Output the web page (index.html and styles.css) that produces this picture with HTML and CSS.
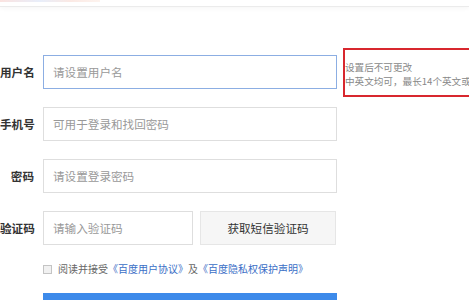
FILE: index.html
```html
<!DOCTYPE html>
<html lang="zh-CN">
<head>
<meta charset="utf-8">
<title>注册</title>
<link rel="stylesheet" href="styles.css">
</head>
<body>
<div class="page">
<div class="topbar"><div class="topbar-strip"></div></div>
<form class="form">
  <div class="row">
    <label class="label">用户名</label>
    <input class="field field-focus" type="text" placeholder="请设置用户名">
    <div class="tip">
      <div class="tip-line">设置后不可更改</div>
      <div class="tip-line">中英文均可，最长14个英文或7个汉字</div>
    </div>
  </div>
  <div class="row">
    <label class="label">手机号</label>
    <input class="field" type="text" placeholder="可用于登录和找回密码">
  </div>
  <div class="row">
    <label class="label">密码</label>
    <input class="field" type="password" placeholder="请设置登录密码">
  </div>
  <div class="row row-code">
    <label class="label">验证码</label>
    <input class="field field-short" type="text" placeholder="请输入验证码">
    <button class="sms-btn" type="button">获取短信验证码</button>
  </div>
  <div class="agree">
    <span class="check"></span>
    <span class="agree-text">阅读并接受<a class="link">《百度用户协议》</a>及<a class="link">《百度隐私权保护声明》</a></span>
  </div>
  <div class="submit"></div>
</form>
</div>
</body>
</html>
```
FILE: styles.css
```css
html, body {
  margin: 0;
  padding: 0;
  background: #fff;
  overflow: hidden;
}
body {
  font-family: "Noto Sans CJK SC", "Microsoft YaHei", sans-serif;
  color: #333;
}
.page {
  width: 469px;
  height: 300px;
  overflow: hidden;
}
.topbar {
  height: 6px;
  border-bottom: 1px solid #ebebeb;
  box-shadow: 0 2px 4px rgba(0, 0, 0, 0.03);
}
.topbar-strip {
  width: 100px;
  height: 2px;
  background: linear-gradient(90deg, #fbe3e0, #e8eefa 40%, #fbe9e4 70%, #fdf3ee);
}
.form {
  padding-top: 48px;
  margin: 0;
}
.row {
  display: flex;
  align-items: center;
  height: 34px;
  margin-bottom: 18px;
}
.row-code {
  margin-top: 1px;
}
.label {
  width: 34px;
  flex: none;
  margin-right: 9px;
  text-align: right;
  white-space: nowrap;
  font-size: 11.6px;
  font-weight: bold;
  color: #333;
}
.field {
  box-sizing: border-box;
  width: 294px;
  height: 34px;
  flex: none;
  margin: 0;
  padding: 0 9px;
  border: 1px solid #dedede;
  border-radius: 0;
  outline: none;
  font-family: inherit;
  font-size: 11.6px;
  color: #333;
  background: #fff;
}
.field::placeholder {
  color: #999;
}
.field-focus {
  border-color: #8caee3;
}
.field-short {
  width: 150px;
}
.sms-btn {
  box-sizing: border-box;
  width: 136px;
  height: 34px;
  flex: none;
  margin: 0 0 0 7px;
  padding: 0;
  border: 1px solid #e6e6e6;
  background: #f6f6f6;
  font-family: inherit;
  font-size: 11.6px;
  color: #333;
}
.tip {
  box-sizing: border-box;
  flex: 1 0 auto;
  height: 49px;
  margin-left: 6px;
  padding: 10px 0 0 0;
  border: 2px solid #d8272e;
  border-right: 0;
  font-size: 9.6px;
  line-height: 14px;
  color: #888;
  white-space: nowrap;
  overflow: hidden;
}
.agree {
  display: flex;
  align-items: center;
  height: 12px;
  margin: 0 0 0 43px;
}
.check {
  box-sizing: border-box;
  width: 9px;
  height: 9px;
  margin-right: 6px;
  border: 1px solid #c4c4c4;
  background: #f1f1f1;
}
.agree-text {
  font-size: 10px;
  line-height: 12px;
  color: #666;
  white-space: nowrap;
}
.link {
  color: #3a6ec6;
}
.submit {
  width: 294px;
  height: 40px;
  margin: 18px 0 0 43px;
  background: #3d8aea;
}
```
